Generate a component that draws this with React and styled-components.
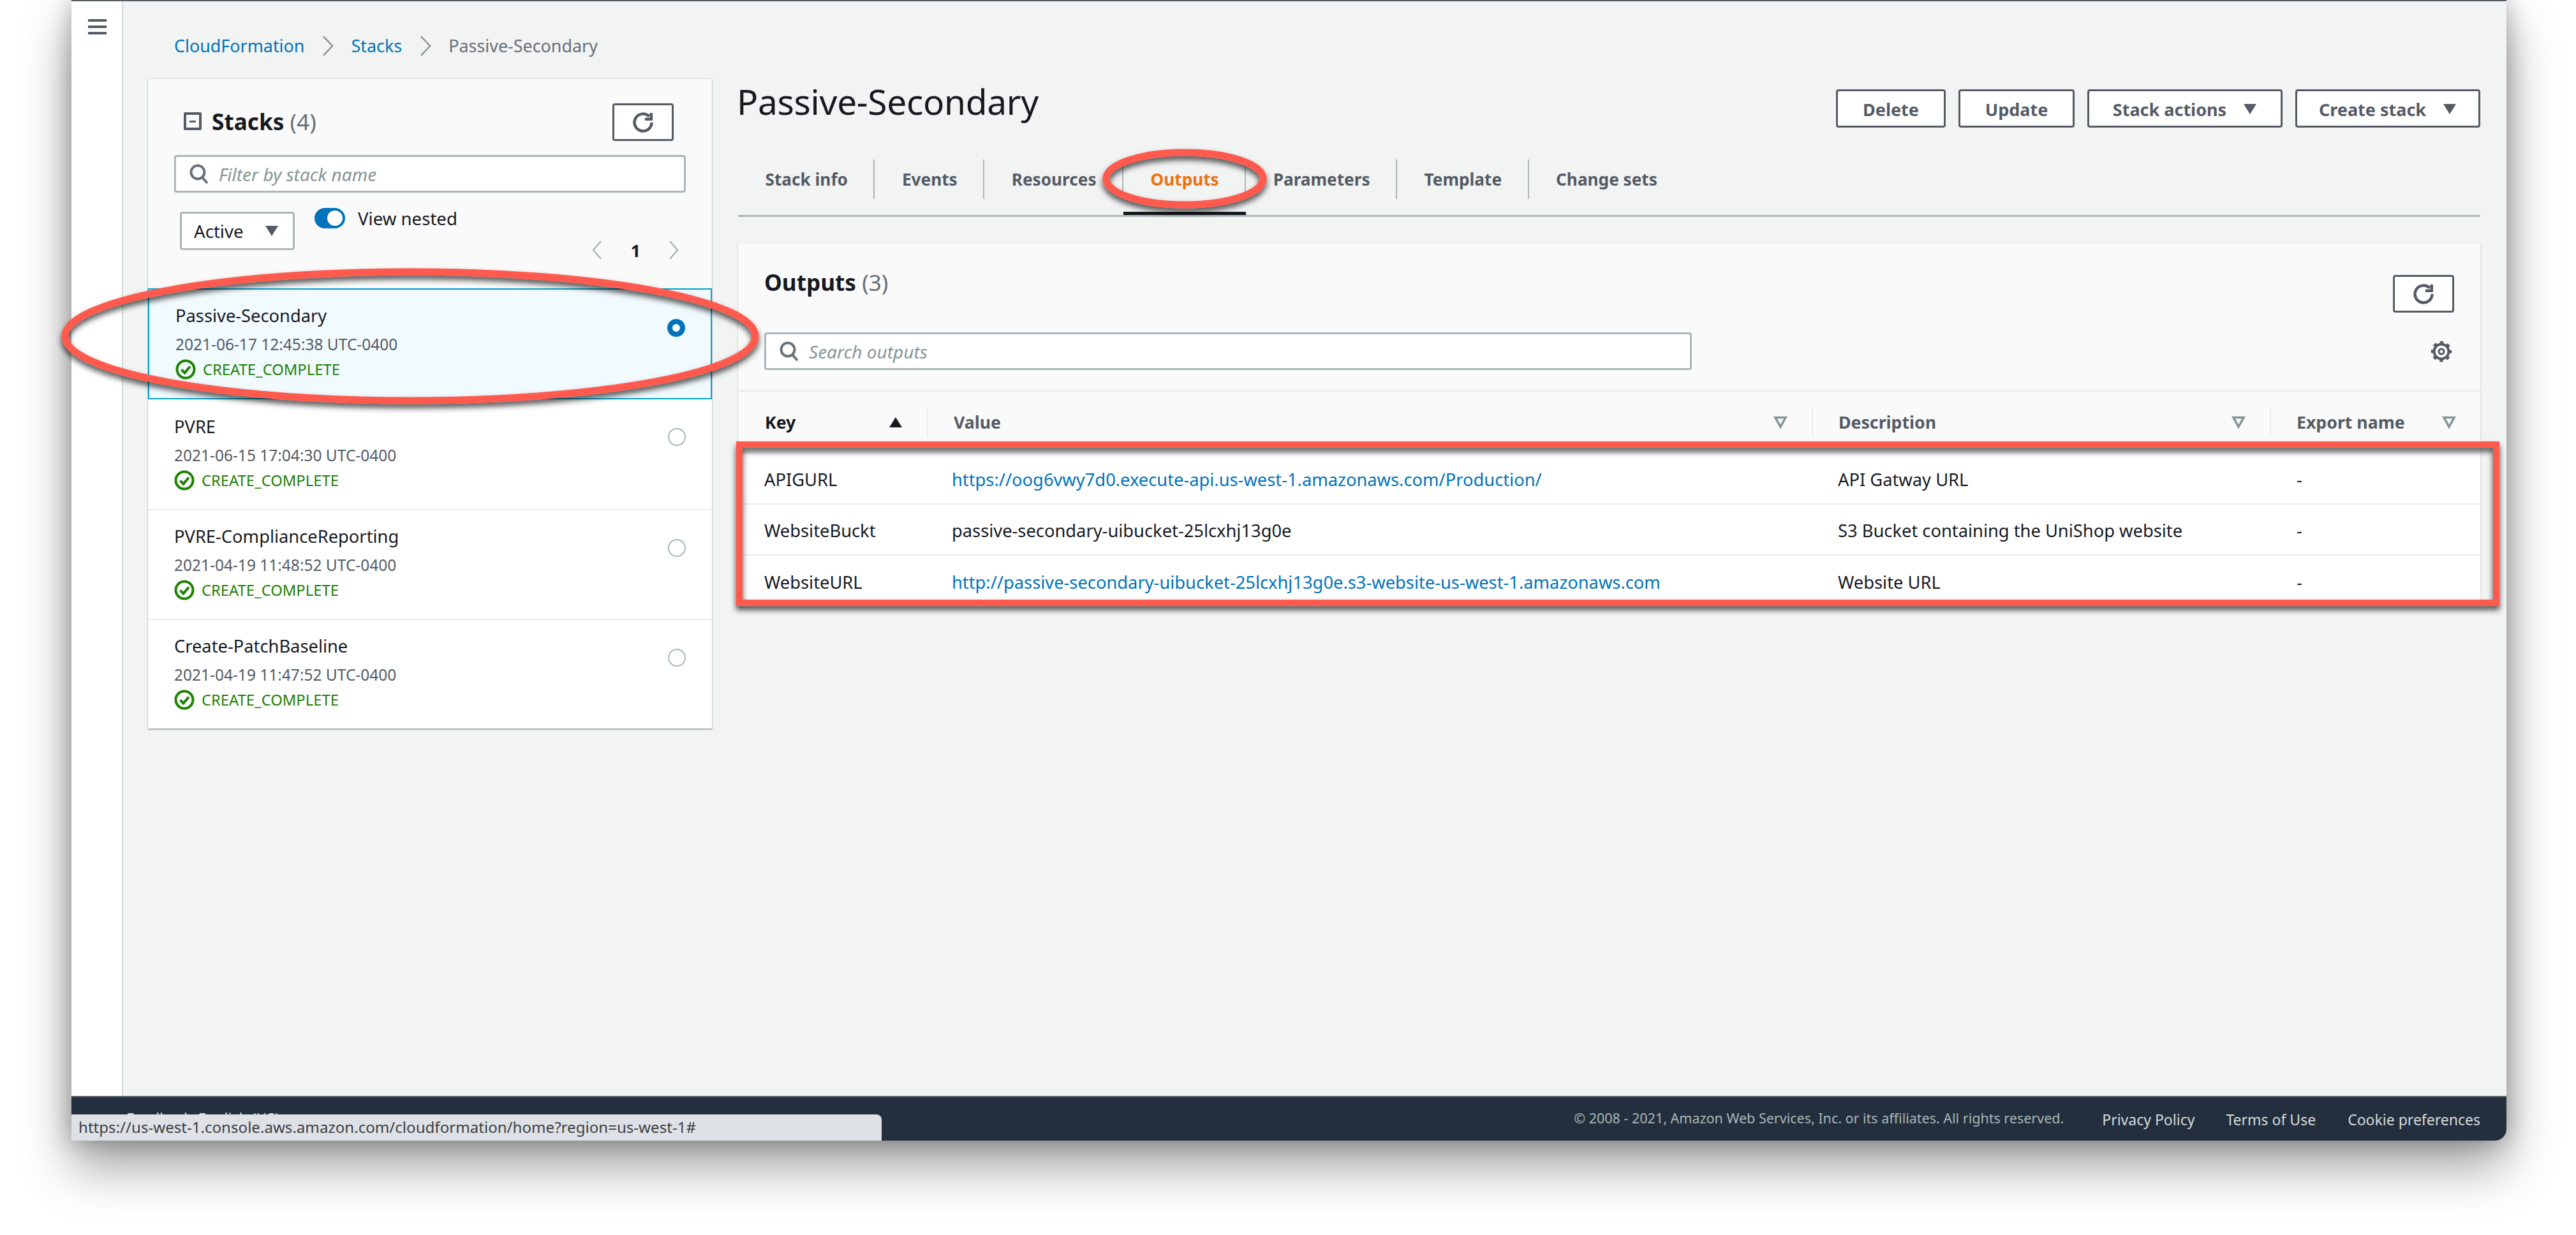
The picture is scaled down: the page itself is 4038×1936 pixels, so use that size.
import React from "react";
import styled, { createGlobalStyle } from "styled-components";

const Global = createGlobalStyle`
  html, body { margin: 0; padding: 0; background: #fff; }
  #root { width: 4038px; height: 1936px; overflow: hidden; }
  * { box-sizing: border-box; }
`;

const Page = styled.div`
  position: relative;
  width: 4038px;
  height: 1936px;
  padding-left: 112px;
  background: #fff;
  font-family: "Noto Sans", "Open Sans", sans-serif;
  font-size: 27.3px;
  color: #16191f;
`;
const Window = styled.div`
  position: relative;
  width: 3817px;
  height: 1788px;
  display: flex;
  flex-direction: column;
  background: #f2f3f3;
  border-top: 2px solid #545b64;
  border-radius: 0 0 18px 0;
  box-shadow: 0 40px 80px rgba(0, 0, 0, 0.38), 0 0 36px rgba(0, 0, 0, 0.28);
`;
const Body = styled.div`
  flex: 1;
  display: flex;
  min-height: 0;
`;
const Rail = styled.div`
  width: 81px;
  flex: none;
  background: #fff;
  border-right: 2px solid #d5dbdb;
  padding: 28px 0 0 26px;
`;
const MenuBar = styled.div`
  width: 29px;
  height: 4px;
  margin-bottom: 6px;
  background: #545b64;
`;
const Content = styled.div`
  flex: 1;
  padding: 0 41px 0 39px;
`;
const Crumbs = styled.nav`
  height: 122px;
  padding: 50px 0 0 41px;
  display: flex;
  align-items: flex-start;
  line-height: 40px;
  font-size: 26.9px;
`;
const CrumbLink = styled.a`
  color: #0073bb;
`;
const CrumbText = styled.span`
  color: #687078;
`;
const CrumbSep = styled.svg`
  width: 20px;
  height: 34px;
  margin: 3px 26px 0 27px;
`;
const Columns = styled.div`
  display: grid;
  grid-template-columns: 884px 2731px;
  column-gap: 41px;
  align-items: start;
`;
const LeftPanel = styled.section`
  background: #fff;
  box-shadow: 0 2px 2px rgba(0, 28, 36, 0.3), 0 0 1px 1px rgba(0, 28, 36, 0.08);
`;
const LeftHead = styled.div`
  height: 328px;
  padding: 38px 41px 0;
  background: #fafafa;
`;
const TitleRow = styled.div`
  display: flex;
  align-items: flex-start;
  justify-content: space-between;
  height: 59px;
  padding-right: 19px;
`;
const StacksTitle = styled.div`
  display: flex;
  align-items: center;
  gap: 16px;
  padding: 6px 0 0 15px;
`;
const Heading = styled.h2`
  margin: 0;
  font-size: 35.2px;
  line-height: 44px;
  font-weight: 700;
`;
const Count = styled.span`
  font-weight: 400;
  color: #687078;
`;
const MinusBox = styled.span`
  width: 28px;
  height: 28px;
  border: 4px solid #545b64;
  border-radius: 2px;
  display: flex;
  align-items: center;
  justify-content: center;
  &::after {
    content: "";
    width: 10px;
    height: 3px;
    background: #545b64;
  }
`;
const IconButton = styled.button`
  width: 96px;
  height: 59px;
  margin-top: ${(p) => p.$top || 0}px;
  padding: 0;
  display: flex;
  align-items: center;
  justify-content: center;
  background: #fff;
  border: 3px solid #545b64;
  border-radius: 4px;
`;
const SearchBox = styled.div`
  display: flex;
  align-items: center;
  gap: 15px;
  width: ${(p) => p.$width}px;
  height: 59px;
  margin-top: ${(p) => p.$top || 0}px;
  padding-left: 20px;
  background: #fff;
  border: 3px solid #aab7b8;
  border-radius: 4px;
  color: #879596;
  font-size: 28px;
  font-style: italic;
`;
const FilterRow = styled.div`
  display: flex;
  align-items: flex-start;
  margin-top: 24px;
  height: 84px;
`;
const Select = styled.div`
  display: flex;
  align-items: center;
  justify-content: space-between;
  width: 180px;
  height: 60px;
  margin: 6px 0 0 9px;
  padding: 0 22px 0 19px;
  background: #fff;
  border: 3px solid #aab7b8;
  border-radius: 4px;
  font-size: 27.6px;
`;
const Toggle = styled.span`
  position: relative;
  width: 48px;
  height: 32px;
  margin-left: 31px;
  border-radius: 16px;
  background: #0073bb;
  &::after {
    content: "";
    position: absolute;
    top: 4px;
    right: 4px;
    width: 24px;
    height: 24px;
    border-radius: 50%;
    background: #fff;
  }
`;
const ToggleLabel = styled.span`
  margin-left: 20px;
  line-height: 32px;
  font-size: 27.6px;
`;
const Pager = styled.div`
  display: flex;
  align-items: center;
  margin: 48px 10px 0 auto;
  height: 36px;
  gap: 43px;
  font-weight: 700;
`;
const PagerIcon = styled.svg`
  width: 18px;
  height: 32px;
`;
const StackRow = styled.div`
  position: relative;
  height: ${(p) => (p.$selected ? 174 : 172)}px;
  padding: ${(p) => (p.$first ? "24px 0 0 41px" : "22px 0 0 41px")};
  background: ${(p) => (p.$selected ? "#f1faff" : "#fff")};
  border: ${(p) => (p.$selected ? "2px solid #00a1c9" : "none")};
  border-top: ${(p) => (p.$selected ? "2px solid #00a1c9" : p.$first ? "none" : "2px solid #eaeded")};
`;
const StackName = styled.div`
  line-height: 38px;
`;
const StackDate = styled.div`
  margin-top: 8px;
  line-height: 36px;
  font-size: 24.5px;
  color: #545b64;
`;
const Status = styled.div`
  display: flex;
  align-items: center;
  gap: 11px;
  margin-top: 4px;
  line-height: 34px;
  font-size: 23.8px;
  color: #1d8102;
`;
const Radio = styled.span`
  position: absolute;
  top: ${(p) => (p.$selected ? 46 : 45)}px;
  right: ${(p) => (p.$selected ? 40 : 41)}px;
  width: 28px;
  height: 28px;
  border-radius: 50%;
  background: #fff;
  border: ${(p) => (p.$selected ? "8px solid #0073bb" : "2px solid #aab7b8")};
`;
const Right = styled.div`
  margin-top: -124px;
`;
const TitleBar = styled.div`
  display: flex;
  justify-content: space-between;
  align-items: flex-start;
  height: 252px;
  padding-top: 140px;
`;
const PageTitle = styled.h1`
  margin: -20px 0 0 -2px;
  font-size: 55px;
  line-height: 78px;
  font-weight: 400;
  letter-spacing: -0.3px;
`;
const Actions = styled.div`
  display: flex;
  gap: 20px;
`;
const ActionButton = styled.button`
  display: flex;
  align-items: center;
  justify-content: center;
  gap: 26px;
  width: ${(p) => p.$width}px;
  height: 60px;
  padding: 2px 0 0;
  background: #fff;
  border: 3px solid #545b64;
  border-radius: 4px;
  color: #545b64;
  font-family: inherit;
  font-size: 27px;
  font-weight: 700;
`;
const Tabs = styled.div`
  display: flex;
  height: 90px;
  border-bottom: 3px solid #aab7b8;
  margin-top: -2px;
`;
const Tab = styled.div`
  position: relative;
  display: flex;
  align-items: flex-start;
  height: 87px;
  padding: 0 42.5px;
  font-size: 26.2px;
  font-weight: 700;
  line-height: 63px;
  color: ${(p) => (p.$active ? "#ec7211" : "#545b64")};
  &::before {
    content: ${(p) => (p.$last ? "none" : '""')};
    position: absolute;
    right: 0;
    top: 0;
    width: 2px;
    height: 62px;
    background: #aab7b8;
  }
  &::after {
    content: ${(p) => (p.$active ? '""' : "none")};
    position: absolute;
    left: 0;
    right: 0;
    bottom: 0;
    height: 5px;
    background: #16191f;
  }
`;
const OutputsPanel = styled.section`
  margin-top: 42px;
  box-shadow: 0 1px 1px 1px rgba(0, 28, 36, 0.1);
  background: #fff;
`;
const OutputsHead = styled.div`
  position: relative;
  height: 232px;
  padding: 38px 41px 0 41px;
  background: #fafafa;
  border-bottom: 3px solid #eaeded;
`;
const OutputsTop = styled.div`
  display: flex;
  justify-content: space-between;
  align-items: flex-start;
  height: 101px;
`;
const SearchRow = styled.div`
  display: flex;
  align-items: center;
  justify-content: space-between;
`;
const GearIcon = styled.svg`
  width: 34px;
  height: 34px;
  margin-right: 3px;
`;
const TableGrid = styled.div`
  display: grid;
  grid-template-columns: 296px 1387px 718px 330px;
`;
const HeadCell = styled.div`
  position: relative;
  display: flex;
  align-items: center;
  justify-content: space-between;
  height: 97px;
  padding: 0 ${(p) => p.$right || 38}px 0 ${(p) => p.$left || 42}px;
  background: #fafafa;
  font-size: 26.7px;
  font-weight: 700;
  color: ${(p) => (p.$dark ? "#16191f" : "#545b64")};
  border-bottom: 2px solid #eaeded;
  &::before {
    content: ${(p) => (p.$first ? "none" : '""')};
    position: absolute;
    left: 0;
    top: 24px;
    height: 48px;
    width: 2px;
    background: #eaeded;
  }
`;
const Cell = styled.div`
  display: flex;
  align-items: center;
  height: 80px;
  padding: 2px 0 0 ${(p) => p.$left || 41}px;
  background: #fff;
  border-bottom: ${(p) => (p.$last ? "none" : "2px solid #eaeded")};
  white-space: nowrap;
`;
const Link = styled.a`
  color: #0073bb;
`;
const Footer = styled.footer`
  flex: none;
  height: 70px;
  display: flex;
  justify-content: space-between;
  padding: 15px 41px 0 86px;
  background: #232f3e;
  border-top: 2px solid #545b64;
  border-radius: 0 0 18px 0;
  color: #d5dbdb;
  font-size: 23px;
  line-height: 36px;
`;
const FooterLeft = styled.div`
  display: flex;
  gap: 10px;
`;
const FooterRight = styled.div`
  display: flex;
  align-items: center;
  height: 40px;
`;
const Copy = styled.span`
  margin-right: 60px;
  margin-top: -4px;
  font-size: 21.5px;
  color: #aab7b8;
`;
const FootLink = styled.a`
  margin-left: ${(p) => p.$gap || 0}px;
  color: #d5dbdb;
`;
const StatusBar = styled.div`
  position: absolute;
  left: 0;
  bottom: 0;
  width: 1270px;
  height: 41px;
  padding-left: 11px;
  background: #dee1e6;
  border-radius: 0 8px 0 0;
  color: #3c4043;
  font-size: 24.1px;
  line-height: 40px;
  white-space: nowrap;
`;
const Markup = styled.svg`
  position: absolute;
  left: 0;
  top: 0;
  width: 4038px;
  height: 1936px;
  pointer-events: none;
`;

const RefreshIcon = () => (
  <svg width="36" height="36" viewBox="0 0 36 36" fill="none">
    <path d="M31.5 18a13.5 13.5 0 1 1-4-9.6" stroke="#545b64" strokeWidth="4.5" />
    <path d="M33 3v12H21v-4.5h7.5V3z" fill="#545b64" />
  </svg>
);
const SearchIcon = () => (
  <svg width="32" height="34" viewBox="0 0 32 34" fill="none">
    <circle cx="14" cy="14" r="10.5" stroke="#687078" strokeWidth="4" />
    <path d="M21 22l8 9" stroke="#687078" strokeWidth="4" />
  </svg>
);
const Caret = () => (
  <svg width="22" height="18" viewBox="0 0 22 18">
    <path d="M1 1h20L11 17z" fill="#545b64" />
  </svg>
);
const Chevron = ({ left }) => (
  <PagerIcon viewBox="0 0 18 32" fill="none">
    <path d={left ? "M15 2L3 16l12 14" : "M3 2l12 14L3 30"} stroke="#aab7b8" strokeWidth="2.5" />
  </PagerIcon>
);
const CrumbChevron = () => (
  <CrumbSep viewBox="0 0 20 34" fill="none">
    <path d="M3 2l14 15L3 32" stroke="#879596" strokeWidth="2.5" />
  </CrumbSep>
);
const CheckIcon = () => (
  <svg width="32" height="32" viewBox="0 0 32 32" fill="none">
    <circle cx="16" cy="16" r="13.5" stroke="#1d8102" strokeWidth="4" />
    <path d="M9.5 16.5l5 5 8.5-10" stroke="#1d8102" strokeWidth="4" />
  </svg>
);
const FilterIcon = () => (
  <svg width="22" height="20" viewBox="0 0 22 20" fill="none">
    <path d="M3 2.5h16l-8 14.5z" stroke="#879596" strokeWidth="3.6" />
  </svg>
);
const SortUp = () => (
  <svg width="22" height="18" viewBox="0 0 22 18">
    <path d="M11 1l10 16H1z" fill="#16191f" />
  </svg>
);
const Gear = () => (
  <GearIcon viewBox="0 0 34 34" fill="none">
    <circle cx="17" cy="17" r="11.5" stroke="#545b64" strokeWidth="4" />
    <circle cx="17" cy="17" r="14.5" stroke="#545b64" strokeWidth="3.5" strokeDasharray="5.4 6" strokeDashoffset="2.7" />
    <circle cx="17" cy="17" r="4" stroke="#545b64" strokeWidth="3" />
  </GearIcon>
);

const stacks = [
  { name: "Passive-Secondary", date: "2021-06-17 12:45:38 UTC-0400", selected: true },
  { name: "PVRE", date: "2021-06-15 17:04:30 UTC-0400" },
  { name: "PVRE-ComplianceReporting", date: "2021-04-19 11:48:52 UTC-0400" },
  { name: "Create-PatchBaseline", date: "2021-04-19 11:47:52 UTC-0400" },
];
const tabs = ["Stack info", "Events", "Resources", "Outputs", "Parameters", "Template", "Change sets"];
const rows = [
  {
    key: "APIGURL",
    value: "https://oog6vwy7d0.execute-api.us-west-1.amazonaws.com/Production/",
    link: true,
    description: "API Gatway URL",
  },
  {
    key: "WebsiteBuckt",
    value: "passive-secondary-uibucket-25lcxhj13g0e",
    description: "S3 Bucket containing the UniShop website",
  },
  {
    key: "WebsiteURL",
    value: "http://passive-secondary-uibucket-25lcxhj13g0e.s3-website-us-west-1.amazonaws.com",
    link: true,
    description: "Website URL",
  },
];

export default function App() {
  return (
    <Page>
      <Global />
      <Window>
        <Body>
          <Rail>
            <MenuBar />
            <MenuBar />
            <MenuBar />
          </Rail>
          <Content>
            <Crumbs>
              <CrumbLink>CloudFormation</CrumbLink>
              <CrumbChevron />
              <CrumbLink>Stacks</CrumbLink>
              <CrumbChevron />
              <CrumbText>Passive-Secondary</CrumbText>
            </Crumbs>
            <Columns>
              <LeftPanel>
                <LeftHead>
                  <TitleRow>
                    <StacksTitle>
                      <MinusBox />
                      <Heading>
                        Stacks <Count>(4)</Count>
                      </Heading>
                    </StacksTitle>
                    <IconButton>
                      <RefreshIcon />
                    </IconButton>
                  </TitleRow>
                  <SearchBox $width={802} $top={22}>
                    <SearchIcon />
                    <span>Filter by stack name</span>
                  </SearchBox>
                  <FilterRow>
                    <Select>
                      <span>Active</span>
                      <Caret />
                    </Select>
                    <Toggle />
                    <ToggleLabel>View nested</ToggleLabel>
                    <Pager>
                      <Chevron left />
                      <span>1</span>
                      <Chevron />
                    </Pager>
                  </FilterRow>
                </LeftHead>
                {stacks.map((s, i) => (
                  <StackRow key={s.name} $selected={s.selected} $first={i === 1}>
                    <StackName>{s.name}</StackName>
                    <StackDate>{s.date}</StackDate>
                    <Status>
                      <CheckIcon />
                      <span>CREATE_COMPLETE</span>
                    </Status>
                    <Radio $selected={s.selected} />
                  </StackRow>
                ))}
              </LeftPanel>
              <Right>
                <TitleBar>
                  <PageTitle>Passive-Secondary</PageTitle>
                  <Actions>
                    <ActionButton $width={172}>Delete</ActionButton>
                    <ActionButton $width={182}>Update</ActionButton>
                    <ActionButton $width={306}>
                      Stack actions <Caret />
                    </ActionButton>
                    <ActionButton $width={290}>
                      Create stack <Caret />
                    </ActionButton>
                  </Actions>
                </TitleBar>
                <Tabs>
                  {tabs.map((t, i) => (
                    <Tab key={t} $active={t === "Outputs"} $last={i === tabs.length - 1}>
                      {t}
                    </Tab>
                  ))}
                </Tabs>
                <OutputsPanel>
                  <OutputsHead>
                    <OutputsTop>
                      <Heading>
                        Outputs <Count>(3)</Count>
                      </Heading>
                      <IconButton $top={11}>
                        <RefreshIcon />
                      </IconButton>
                    </OutputsTop>
                    <SearchRow>
                      <SearchBox $width={1454}>
                        <SearchIcon />
                        <span>Search outputs</span>
                      </SearchBox>
                      <Gear />
                    </SearchRow>
                  </OutputsHead>
                  <TableGrid>
                    <HeadCell $first $dark>
                      Key <SortUp />
                    </HeadCell>
                    <HeadCell>
                      Value <FilterIcon />
                    </HeadCell>
                    <HeadCell>
                      Description <FilterIcon />
                    </HeadCell>
                    <HeadCell>
                      Export name <FilterIcon />
                    </HeadCell>
                    {rows.map((r, i) => (
                      <React.Fragment key={r.key}>
                        <Cell $last={i === 2}>{r.key}</Cell>
                        <Cell $last={i === 2} $left={39}>
                          {r.link ? <Link>{r.value}</Link> : r.value}
                        </Cell>
                        <Cell $last={i === 2}>{r.description}</Cell>
                        <Cell $last={i === 2} $left={42}>
                          -
                        </Cell>
                      </React.Fragment>
                    ))}
                  </TableGrid>
                </OutputsPanel>
              </Right>
            </Columns>
          </Content>
        </Body>
        <Footer>
          <FooterLeft>
            <span>Feedback</span>
            <span>English (US)</span>
          </FooterLeft>
          <FooterRight>
            <Copy>© 2008 - 2021, Amazon Web Services, Inc. or its affiliates. All rights reserved.</Copy>
            <FootLink>Privacy Policy</FootLink>
            <FootLink $gap={49}>Terms of Use</FootLink>
            <FootLink $gap={50}>Cookie preferences</FootLink>
          </FooterRight>
        </Footer>
        <StatusBar>https://us-west-1.console.aws.amazon.com/cloudformation/home?region=us-west-1#</StatusBar>
      </Window>
      <Markup viewBox="0 0 4038 1936" fill="none">
        <defs>
          <filter id="annotationShadow" x="-5%" y="-20%" width="110%" height="140%">
            <feDropShadow dx="0" dy="6" stdDeviation="5" floodColor="#000" floodOpacity="0.7" />
          </filter>
        </defs>
        <g stroke="#ff5a4d" filter="url(#annotationShadow)">
          <ellipse cx="643" cy="527" rx="541" ry="101" strokeWidth="11" />
          <ellipse cx="1857" cy="280" rx="123" ry="41" strokeWidth="11" />
          <rect x="1159" y="697" width="2754" height="248" strokeWidth="10" />
        </g>
      </Markup>
    </Page>
  );
}
